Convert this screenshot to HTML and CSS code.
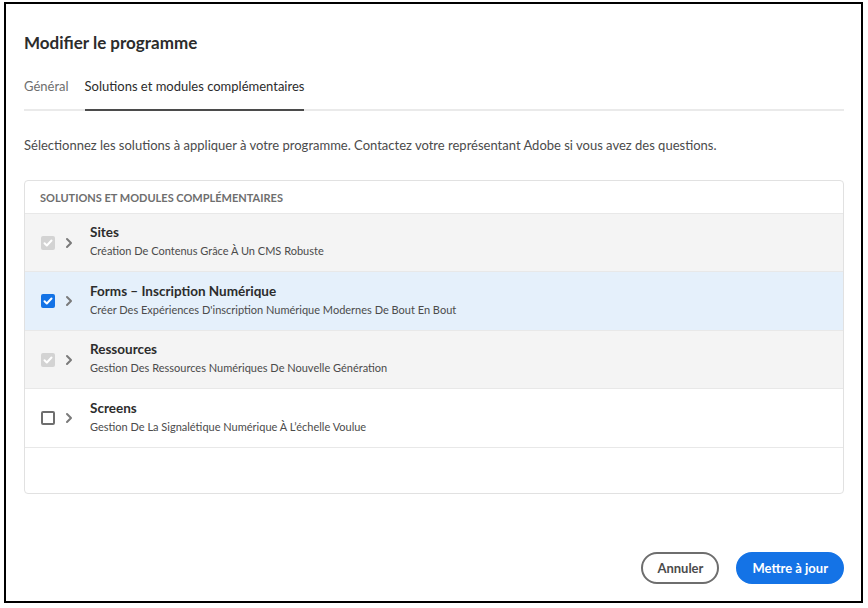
FILE: index.html
```html
<!DOCTYPE html>
<html lang="fr">
<head>
<meta charset="utf-8">
<title>Modifier le programme</title>
<link rel="stylesheet" href="styles.css">
</head>
<body>
<div class="frame">
  <div class="dialog">
    <h1 class="title">Modifier le programme</h1>
    <div class="tabs">
      <div class="tab">Général</div>
      <div class="tab tab-active">Solutions et modules complémentaires</div>
    </div>
    <p class="desc">Sélectionnez les solutions à appliquer à votre programme. Contactez votre représentant Adobe si vous avez des questions.</p>
    <div class="card">
      <div class="card-head">SOLUTIONS ET MODULES COMPLÉMENTAIRES</div>
      <div class="row row-disabled">
        <span class="cb cb-disabled"><svg viewBox="0 0 14 14"><path d="M3.5 7.2l2.3 2.3 4.7-5" /></svg></span>
        <svg class="chev" viewBox="0 0 8 12"><path d="M2 2l4 4-4 4" /></svg>
        <div class="row-text">
          <div class="row-title">Sites</div>
          <div class="row-sub">Création De Contenus Grâce À Un CMS Robuste</div>
        </div>
      </div>
      <div class="row row-tall row-selected">
        <span class="cb cb-checked"><svg viewBox="0 0 14 14"><path d="M3.5 7.2l2.3 2.3 4.7-5" /></svg></span>
        <svg class="chev" viewBox="0 0 8 12"><path d="M2 2l4 4-4 4" /></svg>
        <div class="row-text">
          <div class="row-title">Forms – Inscription Numérique</div>
          <div class="row-sub">Créer Des Expériences D'inscription Numérique Modernes De Bout En Bout</div>
        </div>
      </div>
      <div class="row row-disabled">
        <span class="cb cb-disabled"><svg viewBox="0 0 14 14"><path d="M3.5 7.2l2.3 2.3 4.7-5" /></svg></span>
        <svg class="chev" viewBox="0 0 8 12"><path d="M2 2l4 4-4 4" /></svg>
        <div class="row-text">
          <div class="row-title">Ressources</div>
          <div class="row-sub">Gestion Des Ressources Numériques De Nouvelle Génération</div>
        </div>
      </div>
      <div class="row row-tall">
        <span class="cb cb-empty"></span>
        <svg class="chev" viewBox="0 0 8 12"><path d="M2 2l4 4-4 4" /></svg>
        <div class="row-text">
          <div class="row-title">Screens</div>
          <div class="row-sub">Gestion De La Signalétique Numérique À L’échelle Voulue</div>
        </div>
      </div>
      <div class="card-empty"></div>
    </div>
    <div class="footer">
      <button class="btn btn-secondary">Annuler</button>
      <button class="btn btn-primary">Mettre à jour</button>
    </div>
  </div>
</div>
</body>
</html>
```
FILE: styles.css
```css
* { box-sizing: border-box; }
html, body { margin: 0; padding: 0; background: #fff; }
body {
  padding: 2px 0 0 4px;
  font-family: Lato, "Noto Sans", sans-serif;
  color: #4b4b4b;
}
.frame {
  width: 859px;
  height: 601px;
  border: 2px solid #000;
  background: #fff;
}
.dialog {
  height: 100%;
  display: flex;
  flex-direction: column;
  padding: 27px 17px 17px 18px;
}
.title {
  margin: 0;
  font-size: 17px;
  line-height: 24px;
  font-weight: 700;
  color: #2c2c2c;
}
.tabs {
  display: flex;
  gap: 16px;
  margin-top: 21px;
  border-bottom: 2px solid #eaeaea;
}
.tab {
  font-size: 13px;
  line-height: 20px;
  padding-bottom: 13px;
  color: #6e6e6e;
  margin-bottom: -2px;
  border-bottom: 2px solid transparent;
}
.tab-active {
  color: #2c2c2c;
  border-bottom-color: #4b4b4b;
}
.desc {
  margin: 24px 0 0;
  font-size: 13px;
  line-height: 20px;
  color: #4b4b4b;
}
.card {
  margin-top: 25px;
  border: 1px solid #e1e1e1;
  border-radius: 4px;
  overflow: hidden;
}
.card-head {
  height: 33px;
  padding-left: 15px;
  display: flex;
  align-items: center;
  font-size: 11px;
  font-weight: 700;
  letter-spacing: 0;
  color: #6e6e6e;
  border-bottom: 1px solid #e8e8e8;
}
.row {
  height: 58px;
  display: flex;
  align-items: center;
  padding-left: 16px;
  border-bottom: 1px solid #e8e8e8;
  background: #fff;
}
.row-tall { height: 59px; }
.row-disabled { background: #f4f4f4; }
.row-selected { background: #e5f0fb; }
.cb {
  width: 14px;
  height: 14px;
  border-radius: 2px;
  flex: none;
  display: flex;
}
.cb svg { width: 14px; height: 14px; }
.cb svg path { fill: none; stroke: #fff; stroke-width: 2; stroke-linecap: round; stroke-linejoin: round; }
.cb-disabled { background: #d3d3d3; }
.cb-checked { background: #1473e6; }
.cb-empty { border: 2px solid #6e6e6e; background: #fff; }
.chev {
  width: 8px;
  height: 12px;
  margin-left: 10px;
  flex: none;
}
.chev path { fill: none; stroke: #7a7a7a; stroke-width: 2; stroke-linecap: round; stroke-linejoin: round; }
.row-text {
  margin-left: 17px;
  padding-bottom: 2px;
}
.row-title {
  font-size: 13.5px;
  line-height: 18px;
  font-weight: 700;
  color: #2c2c2c;
}
.row-sub {
  font-size: 11px;
  line-height: 19px;
  color: #4b4b4b;
}
.card-empty { height: 45px; }
.footer {
  margin-top: auto;
  display: flex;
  justify-content: flex-end;
  gap: 17px;
}
.btn {
  height: 32px;
  border-radius: 16px;
  font-family: inherit;
  font-size: 13px;
  font-weight: 700;
  padding: 0 14px;
  cursor: pointer;
}
.btn-secondary {
  background: #fff;
  border: 2px solid #6e6e6e;
  color: #4b4b4b;
}
.btn-primary {
  background: #1473e6;
  border: 2px solid #1473e6;
  color: #fff;
}
```
